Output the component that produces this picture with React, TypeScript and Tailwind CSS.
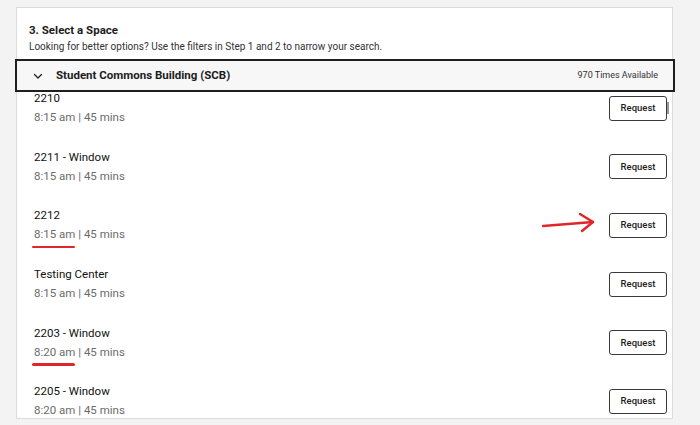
import React from "react";

const SLOTS = [
  { name: "2210", time: "8:15 am" },
  { name: "2211 - Window", time: "8:15 am" },
  { name: "2212", time: "8:15 am", mark: true },
  { name: "Testing Center", time: "8:15 am" },
  { name: "2203 - Window", time: "8:20 am", mark: true },
  { name: "2205 - Window", time: "8:20 am" },
];

function Chevron() {
  return (
    <svg width="12" height="12" viewBox="0 0 24 24" fill="none" stroke="#222" strokeWidth="2.6" strokeLinecap="round" strokeLinejoin="round">
      <path d="M5 9l7 7 7-7" />
    </svg>
  );
}

export default function App() {
  return (
    <div
      className="relative h-[425px] w-[700px] overflow-hidden bg-[#f3f3f3] pl-[16px] pt-[7px]"
      style={{ fontFamily: "Roboto, 'Liberation Sans', sans-serif" }}
    >
      <div className="relative flex h-[412px] w-[657px] flex-col border border-[#dcdcdc] bg-white">
        {/* Heading */}
        <div className="px-[12px] pt-[14px]">
          <h2 className="text-[11.5px] font-bold leading-[16px] text-[#1d1d1d]">3. Select a Space</h2>
          <p className="mt-[2px] text-[10px] leading-[14px] text-[#333]">
            Looking for better options? Use the filters in Step 1 and 2 to narrow your search.
          </p>
        </div>

        {/* Accordion header */}
        <div className="-ml-[2px] -mr-[3px] mt-[5px] flex h-[33px] items-center border-2 border-[#1f1f1f] bg-[#f7f7f7] pl-[15px] pr-[15px]">
          <Chevron />
          <span className="ml-[12px] text-[11.5px] font-bold text-[#1d1d1d]">Student Commons Building (SCB)</span>
          <span className="ml-auto text-[9px] text-[#333]">970 Times Available</span>
        </div>

        {/* Scrolled list */}
        <div className="relative flex-1 overflow-hidden">
          <div className="-mt-[13px] flex flex-col">
            {SLOTS.map((s) => (
              <div key={s.name} className="flex h-[58.6px] items-center pl-[17px] pr-[5px]">
                <div className="flex flex-col">
                  <span className="text-[11.5px] leading-[19px] text-[#111]">{s.name}</span>
                  <span className="text-[11.5px] leading-[19px] text-[#6b6b6b]">
                    <span className="relative">
                      {s.time}
                      {s.mark && (
                        <span className="absolute -bottom-[7px] -left-[2px] h-[2.5px] w-[43px] rounded-full bg-[#e0262b]" />
                      )}
                    </span>{" "}
                    | 45 mins
                  </span>
                </div>
                <button className="ml-auto h-[25px] w-[58px] rounded-[3px] border border-[#3a3a3a] bg-white text-[9.5px] font-medium text-[#1d1d1d]">
                  Request
                </button>
              </div>
            ))}
          </div>
          {/* scrollbar thumb */}
          <div className="absolute right-[3px] top-[10px] h-[12px] w-[2px] bg-[#9a9a9a]" />
        </div>
      </div>

      {/* Red arrow annotation */}
      <svg className="absolute left-[540px] top-[210px]" width="60" height="26" viewBox="0 0 60 26" fill="none" stroke="#e0262b" strokeWidth="2.4" strokeLinecap="round" strokeLinejoin="round">
        <path d="M3 16 L53 12" />
        <path d="M40 4 L53 12 L42 21" />
      </svg>
    </div>
  );
}
